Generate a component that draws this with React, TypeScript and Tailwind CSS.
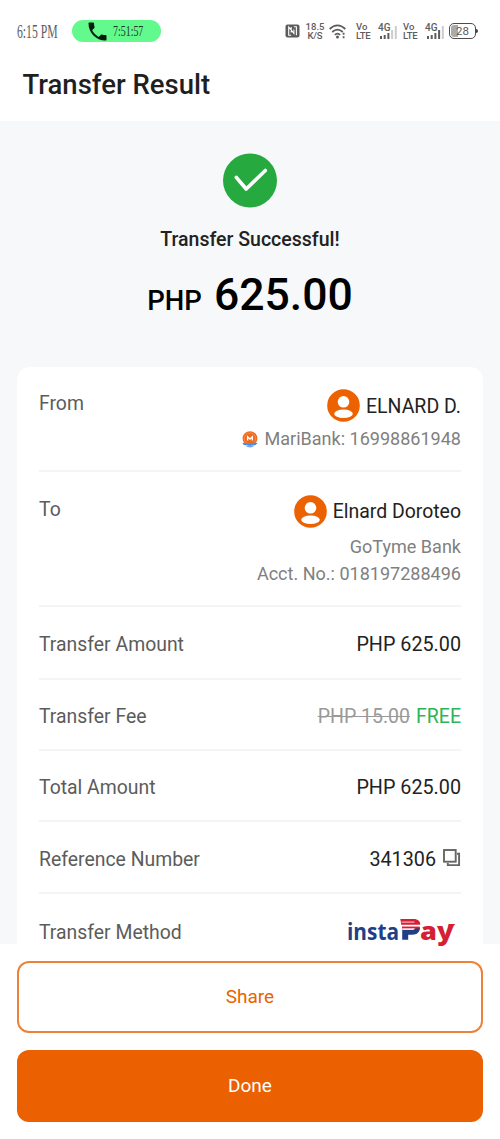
import type { ReactNode } from "react";

type RowProps = {
  label: string;
  className: string;
  children: ReactNode;
};

function Row({ label, className, children }: RowProps) {
  return (
    <div className={`flex items-center justify-between border-b-2 border-[#f4f4f5] pt-[5px] ${className}`}>
      <span className="text-[19.4px] leading-6 text-[#5c5c5c]">{label}</span>
      <div className="flex items-center text-[19.75px] leading-6 text-[#222]">{children}</div>
    </div>
  );
}

function Avatar() {
  return (
    <svg className="size-[33px] shrink-0" viewBox="0 0 33 33">
      <circle cx="16.5" cy="16.5" r="16.3" fill="#ec6200" />
      <circle cx="16.5" cy="12.8" r="5.8" fill="#fff" />
      <ellipse cx="16.5" cy="24.7" rx="9.3" ry="4.3" fill="#fff" />
    </svg>
  );
}

function MariBankLogo() {
  return (
    <svg className="h-[17px] w-4 shrink-0" viewBox="0 0 16 17">
      <circle cx="8" cy="7.6" r="7.4" fill="#ed6b1c" />
      <circle cx="8" cy="7.6" r="5.7" fill="none" stroke="#f6a36c" strokeWidth="0.6" />
      <path d="M5.6 9.6V5.8L8 8l2.4-2.2v3.8" fill="none" stroke="#fff" strokeWidth="1.3" />
      <path d="M.5 12.2c2.5-1.5 4 1 7.5.2s5-1 7.5-.2l-1.8 1.9c-2-.5-3.5 0-5.7.4-2.5.4-4-.8-5.9-.3z" fill="#4c8ce8" />
      <path d="M3 14.3c2 1.4 3.5.5 5 .5s3-.8 5-.2c-2.2 2.2-7 2.8-10-.3z" fill="#75a8ef" />
    </svg>
  );
}

function Signal({ bars }: { bars: number }) {
  const heights = [3, 4, 6, 9, 13];
  return (
    <div className="relative h-[16px] w-5">
      <span className="absolute left-0 top-0 text-[10px] font-medium leading-[9px]">4G</span>
      <svg className="absolute bottom-0 left-0.5 h-[13px] w-[18px]" viewBox="0 0 18 13">
        {heights.map((h, i) => (
          <rect key={i} x={i * 3.7} y={13 - h} width="2" height={h} fill={i < bars ? "#5c5c5c" : "#ccc"} />
        ))}
      </svg>
    </div>
  );
}

function VoLte() {
  return (
    <div className="w-[15px] text-[9.5px] font-medium leading-[9px]">
      <div>Vo</div>
      <div className="-tracking-[0.3px]">LTE</div>
    </div>
  );
}

function StatusBar() {
  return (
    <div className="flex h-[62px] items-center pl-[17px] text-[#5c5c5c]">
      <div className="w-[55px] pt-[3px]">
        <span className="inline-block origin-left scale-x-[0.65] whitespace-nowrap font-['Liberation_Serif',serif] text-[18px] leading-5">
          6:15 PM
        </span>
      </div>
      <div className="flex h-[22px] w-[89px] items-center rounded-full bg-[#62fa8c] pl-4 text-[#1c3824]">
        <svg className="size-[19px] shrink-0" viewBox="2.5 2.5 19 19" fill="#0a190e">
          <path d="M6.62 10.79c1.44 2.83 3.76 5.14 6.59 6.59l2.2-2.2c.27-.27.67-.36 1.02-.24 1.12.37 2.33.57 3.57.57.55 0 1 .45 1 1V20c0 .55-.45 1-1 1-9.39 0-17-7.61-17-17 0-.55.45-1 1-1h3.5c.55 0 1 .45 1 1 0 1.25.2 2.45.57 3.57.11.35.03.74-.25 1.02z" />
        </svg>
        <div className="ml-[6px] w-[30px]">
          <span className="inline-block origin-left scale-x-[0.64] whitespace-nowrap font-['Liberation_Serif',serif] text-[15.5px] leading-5">
            7:51:57
          </span>
        </div>
      </div>

      <div className="flex items-center pl-[124px]">
        <svg className="h-[14px] w-[15px]" viewBox="0 0 15 14">
          <rect x="0.5" y="0.5" width="14" height="13" rx="2" fill="#5c5c5c" />
          <path d="M6.2 11.2H3.7V3l5.2 6.4V5.5M6.2 8.4V3M8.9 2.8h2.5v8.4" fill="none" stroke="#fff" strokeWidth="1.1" />
        </svg>
        <div className="ml-[5px] w-[20px] text-center text-[9.5px] font-medium leading-[9px]">
          <div>18.5</div>
          <div className="-tracking-[0.2px]">K/S</div>
        </div>
        <svg className="ml-[4px] h-[15px] w-[18px]" viewBox="0 0 18 15" fill="none" stroke="#5c5c5c" strokeWidth="1.7">
          <path d="M.6 5Q8.5-2.2 16.4 5" />
          <path d="M3.2 8Q8.5 3.2 13.8 8" />
          <path d="M5.8 10.8Q8.5 8.3 11.2 10.8" />
          <circle cx="8.5" cy="13" r="1.5" fill="#5c5c5c" stroke="none" />
          <path d="M14.6 8.8v2M14.6 12.2v2" strokeWidth="1.8" />
        </svg>
        <div className="ml-[9px]">
          <VoLte />
        </div>
        <div className="ml-[7px]">
          <Signal bars={3} />
        </div>
        <div className="ml-[5px]">
          <VoLte />
        </div>
        <div className="ml-[7px]">
          <Signal bars={4} />
        </div>
        <div className="ml-[4px] flex items-center">
          <div className="relative flex h-[16px] w-[27px] items-center justify-center overflow-hidden rounded-[5px] border-[1.5px] border-[#4c4c4c]">
            <div className="absolute inset-y-px left-px w-[7px] rounded-l-[3px] bg-[#aaa]" />
            <span className="relative text-[11.5px] leading-3">28</span>
          </div>
          <div className="h-1 w-[2px] rounded-r-sm bg-[#444]" />
        </div>
      </div>
    </div>
  );
}

function InstaPayLogo() {
  return (
    <svg
      className="h-[30px] w-[110px] overflow-visible"
      viewBox="0 0 110 30"
      fontFamily="'Open Sans', sans-serif"
      fontWeight="700"
    >
      <text x="0" y="22.8" fontSize="23.5" fontWeight="700" fill="#213f86" textLength="52" lengthAdjust="spacingAndGlyphs">
        insta
      </text>
      <path d="M53.3 2h13.2c4.7 0 7 2.5 6.7 5.8h-19c-.2-2-.5-4-.9-5.8z" fill="#d51f35" />
      <path d="M55.2 12.7h10.4c2 0 2.8-1.2 2.9-2.4h4.6c-.3 4.8-3 7.5-7.8 7.5h-4.1v5h-6z" fill="#213f86" />
      <path d="M55 9.5h17.8l-1 2H55z" fill="#d51f35" />
      <path d="M54.5 5.1h13M55 8.6h18M56 12.1h11" stroke="#fff" strokeWidth="0.8" />
      <text x="73" y="22.8" fontSize="25" fontWeight="800" fill="#d51f35" textLength="33.5" lengthAdjust="spacingAndGlyphs">
        ay
      </text>
      <path d="M101.5 7h6.8L106 9.5h-5z" fill="#d51f35" />
    </svg>
  );
}

export default function App() {
  return (
    <div className="flex h-[1139px] w-[500px] flex-col bg-white font-[Roboto,sans-serif]">
      <header className="h-[121px] shrink-0">
        <StatusBar />
        <h1 className="pl-[22.5px] pt-[5px] text-[27.5px] font-medium leading-9 text-[#1f1f1f]">Transfer Result</h1>
      </header>

      <main className="h-[823px] shrink-0 bg-[#f6f8fa] px-[17px] pt-8">
        <section className="flex h-[214px] flex-col items-center">
          <svg className="size-[55px]" viewBox="0 0 55 55">
            <circle cx="27" cy="27.5" r="27" fill="#26aa40" />
            <path
              d="M13.3 24.3 23.2 36 42.3 17.5"
              fill="none"
              stroke="#fff"
              strokeWidth="3.6"
              strokeLinecap="round"
              strokeLinejoin="round"
            />
          </svg>
          <h2 className="mt-[20px] text-[19.5px] font-medium leading-6 text-[#222]">Transfer Successful!</h2>
          <div className="mt-[17px] flex items-baseline gap-[12px] font-medium text-black">
            <span className="text-[27.5px] leading-[52px]">PHP</span>
            <span className="text-[44.5px] leading-[52px]">625.00</span>
          </div>
        </section>

        <section className="h-[577px] rounded-t-[13px] bg-white px-[22px]">
          <div className="flex h-[105px] justify-between border-b-2 border-[#f4f4f5]">
            <span className="pt-[25px] text-[19.4px] leading-6 text-[#5c5c5c]">From</span>
            <div className="flex flex-col items-end pt-[22px]">
              <div className="flex items-center gap-[6px]">
                <Avatar />
                <span className="pt-[3px] text-[19.5px] leading-6 text-[#222]">ELNARD D.</span>
              </div>
              <div className="mt-[5px] flex items-center gap-[7px]">
                <MariBankLogo />
                <span className="text-[18.05px] leading-6 text-[#808080]">MariBank: 16998861948</span>
              </div>
            </div>
          </div>

          <div className="flex h-[135px] justify-between border-b-2 border-[#f4f4f5]">
            <span className="pt-[26px] text-[19.4px] leading-6 text-[#5c5c5c]">To</span>
            <div className="flex flex-col items-end pt-[22.5px]">
              <div className="flex items-center gap-[6px]">
                <Avatar />
                <span className="pt-px text-[19.45px] leading-6 text-[#222]">Elnard Doroteo</span>
              </div>
              <span className="mt-[5.5px] text-[18.05px] leading-[27px] text-[#808080]">GoTyme Bank</span>
              <span className="text-[18.05px] leading-[27px] text-[#808080]">Acct. No.: 018197288496</span>
            </div>
          </div>

          <Row label="Transfer Amount" className="h-[73px]">PHP 625.00</Row>
          <Row label="Transfer Fee" className="h-[71px]">
            <span className="text-[19.5px] text-[#999] line-through">PHP 15.00</span>
            <span className="ml-[6px] text-[19.5px] text-[#2bb55a]">FREE</span>
          </Row>
          <Row label="Total Amount" className="h-[71px]">PHP 625.00</Row>
          <Row label="Reference Number" className="h-[72px]">
            341306
            <svg className="mb-[3px] ml-[7px] size-[18px]" viewBox="0 0 18 18" fill="none" stroke="#666" strokeWidth="1.9">
              <rect x="1" y="1" width="11.7" height="11.7" />
              <path d="M14 4.7h2.1v11.4H4.8V14" />
            </svg>
          </Row>
          <div className="flex h-[50px] justify-between pt-[23px]">
            <span className="pt-[4px] text-[19.4px] leading-6 text-[#5c5c5c]">Transfer Method</span>
            <div className="mr-[4px]">
              <InstaPayLogo />
            </div>
          </div>
        </section>
      </main>

      <footer className="flex flex-col gap-[17px] px-[17px] pt-[17px]">
        <button type="button" className="h-[72px] rounded-xl border-2 border-[#ed8239] text-[19px] text-[#eb6200]">
          Share
        </button>
        <button type="button" className="h-[72px] rounded-xl bg-[#eb6000] text-[19px] text-white">
          Done
        </button>
      </footer>
    </div>
  );
}
